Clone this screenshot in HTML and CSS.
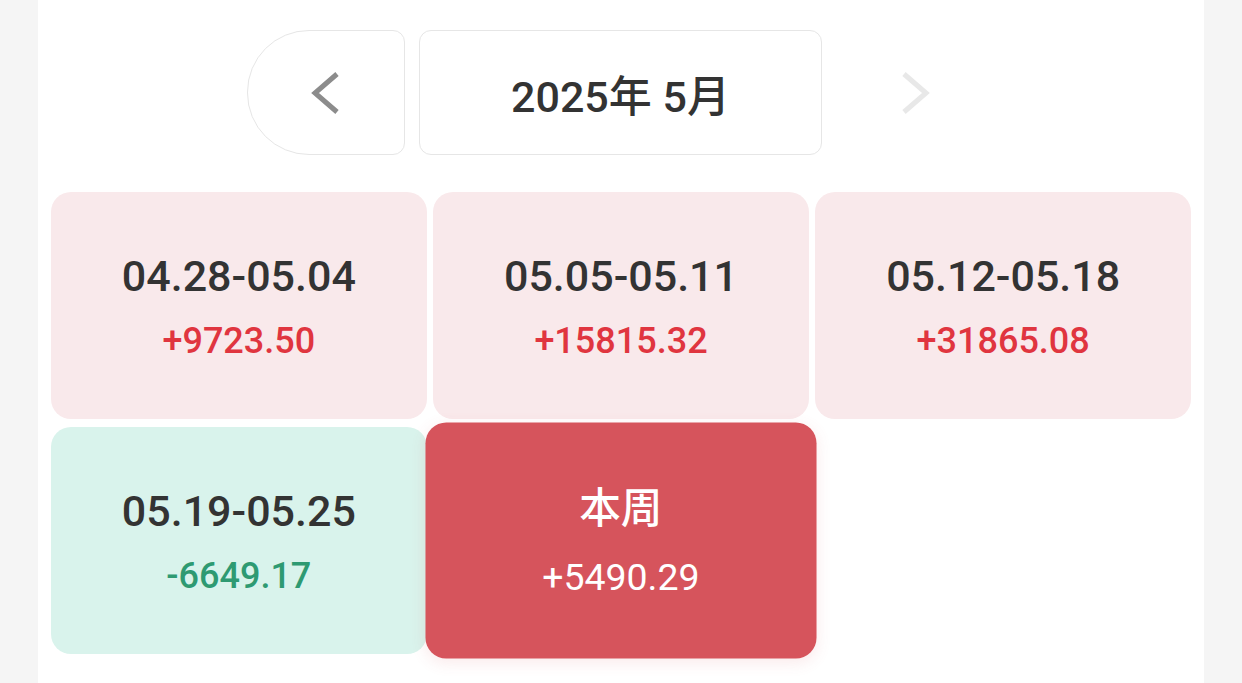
FILE: index.html
```html
<!DOCTYPE html>
<html lang="zh-CN">
<head>
  <meta charset="UTF-8">
  <meta name="viewport" content="width=device-width, initial-scale=1.0">
  <title>周收益</title>
  <link rel="stylesheet" href="styles.css">
</head>
<body>
  <div class="panel">
    <div class="month-bar">
      <button class="nav-btn nav-prev" type="button" aria-label="上个月">
        <svg width="30" height="44" viewBox="0 0 30 44"><polyline points="26,3 4,22 26,41" fill="none" stroke="#8c8c8c" stroke-width="5"/></svg>
      </button>
      <div class="month-title">2025年 5月</div>
      <button class="nav-btn nav-next" type="button" aria-label="下个月">
        <svg width="30" height="44" viewBox="0 0 30 44"><polyline points="4,3 26,22 4,41" fill="none" stroke="#e8e8e8" stroke-width="5"/></svg>
      </button>
    </div>

    <div class="week-grid">
      <div class="week-card up">
        <div class="week-range">04.28-05.04</div>
        <div class="week-amount">+9723.50</div>
      </div>
      <div class="week-card up">
        <div class="week-range">05.05-05.11</div>
        <div class="week-amount">+15815.32</div>
      </div>
      <div class="week-card up">
        <div class="week-range">05.12-05.18</div>
        <div class="week-amount">+31865.08</div>
      </div>
      <div class="week-card down">
        <div class="week-range">05.19-05.25</div>
        <div class="week-amount">-6649.17</div>
      </div>
      <div class="week-card current">
        <div class="week-range">本周</div>
        <div class="week-amount">+5490.29</div>
      </div>
    </div>
  </div>
</body>
</html>
```

FILE: styles.css
```css
* {
  box-sizing: border-box;
  margin: 0;
  padding: 0;
}

body {
  background-color: #f5f5f5;
  font-family: Roboto, "Noto Sans CJK SC", sans-serif;
  color: #333;
}

.panel {
  margin-left: 38px;
  width: 1166px;
  min-height: 100vh;
  background-color: #fff;
  padding: 30px 13px 0;
}

.month-bar {
  display: flex;
  justify-content: center;
  gap: 14px;
  margin-left: -1px;
}

.nav-btn {
  width: 158px;
  height: 125px;
  background: #fff;
  border: 1px solid #e6e6e6;
  border-radius: 62px 12px 12px 62px;
  display: flex;
  align-items: center;
  justify-content: center;
  cursor: pointer;
}

.nav-next {
  border-color: transparent;
}

.month-title {
  width: 403px;
  height: 125px;
  border: 1px solid #e6e6e6;
  border-radius: 12px;
  display: flex;
  align-items: center;
  justify-content: center;
  font-size: 43px;
  font-weight: 500;
  color: #333;
}

.week-grid {
  display: grid;
  grid-template-columns: repeat(3, 1fr);
  column-gap: 6.5px;
  row-gap: 8px;
  margin-top: 37px;
}

.week-card {
  height: 227px;
  border-radius: 20px;
  display: flex;
  flex-direction: column;
  align-items: center;
  justify-content: center;
  gap: 20px;
}

.week-range {
  font-size: 43px;
  font-weight: 500;
  line-height: 50px;
  color: #333;
}

.week-amount {
  font-size: 36px;
  font-weight: 500;
  line-height: 40px;
}

.up {
  background-color: #f9e9eb;
}

.up .week-amount {
  color: #e0353f;
}

.down {
  background-color: #d9f3ec;
}

.down .week-amount {
  color: #2e9a72;
}

.current {
  background-color: #d6545c;
  transform: scale(1.04);
  box-shadow: 0 4px 14px rgba(214, 84, 92, 0.12);
}

.current .week-range {
  font-size: 40px;
  font-weight: 500;
  color: #fff;
}

.current .week-amount {
  color: #fff;
  font-weight: 400;
}
```
